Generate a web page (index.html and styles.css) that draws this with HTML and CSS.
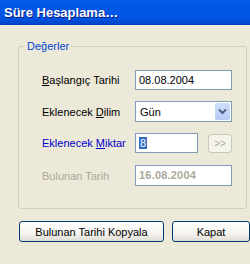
FILE: index.html
```html
<!DOCTYPE html>
<html lang="tr">
<head>
  <meta charset="UTF-8">
  <title>Süre Hesaplama</title>
  <link rel="stylesheet" href="styles.css">
</head>
<body>
  <div class="window">
    <div class="titlebar">Süre Hesaplama…</div>

    <div class="client">
      <!-- Değerler group -->
      <fieldset class="group">
        <legend>Değerler</legend>

        <div class="row">
          <label for="start"><u>B</u>aşlangıç Tarihi</label>
          <input type="text" id="start" class="field" value="08.08.2004">
        </div>

        <div class="row">
          <label for="unit">Eklenecek <u>D</u>ilim</label>
          <div class="combo" id="unit">
            <span class="combo-text">Gün</span>
            <span class="combo-btn">
              <svg width="9" height="7" viewBox="0 0 9 7"><path d="M1 1.5 L4.5 5 L8 1.5" fill="none" stroke="#4d6185" stroke-width="2"/></svg>
            </span>
          </div>
        </div>

        <div class="row">
          <label for="amount" class="accent">Eklenecek <u>M</u>iktar</label>
          <div class="field short"><span class="sel">8</span></div>
          <button class="small-btn" disabled>&gt;&gt;</button>
        </div>

        <div class="row last">
          <label class="disabled">Bulunan Tarih</label>
          <div class="field readonly">16.08.2004</div>
        </div>
      </fieldset>

      <div class="actions">
        <button class="btn wide">Bulunan Tarihi Kopyala</button>
        <button class="btn">Kapat</button>
      </div>
    </div>
  </div>
</body>
</html>
```

FILE: styles.css
```css
body {
  margin: 0;
  background: #ece9d8;
  font-family: "Liberation Sans", Arial, sans-serif;
  font-size: 11px;
  color: #000;
  overflow: hidden;
}
.window {
  width: 250px;
  height: 264px;
}
.titlebar {
  height: 25px;
  box-sizing: border-box;
  padding: 5px 0 0 4px;
  background: linear-gradient(#0a5fe8 0%, #0058e6 15%, #0055e3 70%, #0048d0 92%, #003cb8 100%);
  color: #fff;
  font-weight: bold;
  font-size: 13px;
  line-height: 16px;
  text-shadow: 1px 1px #0a1883;
}
.client {
  padding: 15px 3px 0 18px;
}
.group {
  margin: 0;
  padding: 17px 14px 22px 23px;
  border: 1px solid #d0d0bf;
  border-radius: 3px;
  display: flex;
  flex-direction: column;
  gap: 11px;
}
.group legend {
  margin-left: -18px;
  padding: 0 2px 0 3px;
  color: #0046d5;
  line-height: 13px;
}
.row {
  display: flex;
  align-items: center;
}
.row.last {
  margin-top: 1px;
}
.row label {
  width: 93px;
  flex: none;
}
.accent {
  color: #0000cc;
}
.disabled {
  color: #aca899;
}
.field {
  width: 97px;
  height: 20px;
  box-sizing: border-box;
  border: 1px solid #7f9db9;
  background: #fff;
  padding: 2px 3px;
  font: inherit;
  line-height: 14px;
  margin: 0;
}
.field.short {
  width: 63px;
}
.field.readonly {
  height: 21px;
  color: #aca899;
  font-weight: bold;
  letter-spacing: 0.2px;
}
.sel {
  background: #316ac5;
  color: #fff;
  padding: 0 1px;
}
.combo {
  width: 97px;
  height: 21px;
  box-sizing: border-box;
  border: 1px solid #7f9db9;
  background: #fff;
  display: flex;
  align-items: center;
  justify-content: space-between;
  padding: 1px;
}
.combo-text {
  padding-left: 3px;
}
.combo-btn {
  width: 15px;
  height: 17px;
  border-radius: 2px;
  background: linear-gradient(#d0defb, #b7cbf7);
  display: flex;
  align-items: center;
  justify-content: center;
}
.small-btn {
  margin-left: 10px;
  width: 24px;
  height: 19px;
  border: 1px solid #c9c7ba;
  border-radius: 3px;
  background: #f5f4ea;
  color: #aca899;
  font: inherit;
  font-size: 10px;
  padding: 0;
}
.actions {
  display: flex;
  gap: 8px;
  margin-top: 12px;
  padding-left: 1px;
}
.btn {
  height: 21px;
  width: 78px;
  flex: none;
  border: 1px solid #003c74;
  border-radius: 3px;
  background: linear-gradient(#ffffff, #f4f3ee 60%, #dedcd4);
  font: inherit;
  color: #000;
  padding: 0;
}
.btn.wide {
  width: 145px;
}
```
